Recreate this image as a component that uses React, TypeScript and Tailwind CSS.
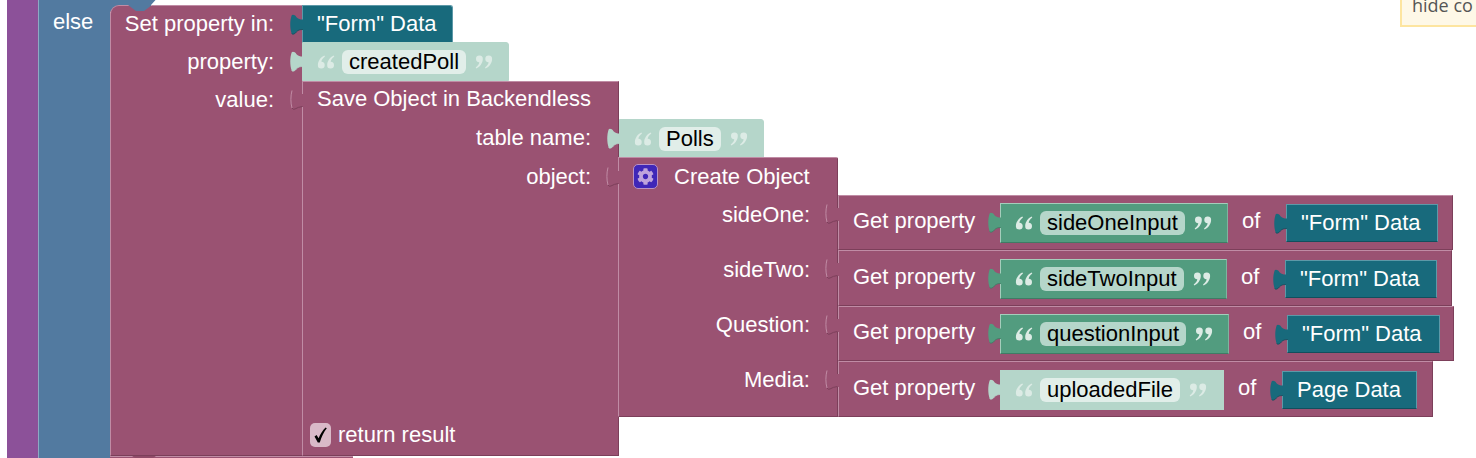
import React from "react";
import { FaCog } from "react-icons/fa";

const Tab = ({ className, fill, stroke }: { className: string; fill: string; stroke: string }) => (
  <svg className={`absolute w-[13px] h-[21px] ${className}`} viewBox="0 0 13 21">
    <path d="M13 5.5C10 5.5 8 5 6.5 3.2C5 0.8 2.5 0.2 1.6 1.5C-0.2 7 -0.2 14 1.6 19.5C2.5 20.8 5 20.2 6.5 17.8C8 16 10 15.5 13 15.5Z" fill={fill} />
    <path d="M1.6 19.5C2.5 20.8 5 20.2 6.5 17.8C8 16 10 15.5 13 15.5" fill="none" stroke={stroke} strokeWidth="0.8" />
  </svg>
);

const Socket = ({ className }: { className: string }) => (
  <svg className={`absolute w-[15px] h-[21px] ${className}`} viewBox="0 0 15 21">
    <rect x="10" y="4" width="5" height="13" fill="#9a5272" />
    <path d="M2 0.5C0.5 6 0.5 13 2 18" fill="none" stroke="#c08ca5" strokeWidth="1" />
    <path d="M2 18Q3 20 5 19Q8 17 12.5 16.5" fill="none" stroke="#7c3f5a" strokeWidth="1" />
  </svg>
);

const Quote = ({ close }: { close?: boolean }) => (
  <svg className={`w-[18px] h-[14px] shrink-0 ${close ? "ml-[2px]" : "rotate-180"}`} viewBox="0 0 18 14">
    <path d="M4.5 0.5a3.3 3.3 0 0 1 3.3 3.5c0 4-3 8-6.5 9.5l-.6-1c2-1.4 3.4-3.4 3.6-5.2a3.3 3.3 0 0 1 .2-6.8Z" fill="#dcebe5" />
    <path d="M13.8 0.5a3.3 3.3 0 0 1 3.3 3.5c0 4-3 8-6.5 9.5l-.6-1c2-1.4 3.4-3.4 3.6-5.2a3.3 3.3 0 0 1 .2-6.8Z" fill="#dcebe5" />
  </svg>
);

const Str = ({ text, light, className }: { text: string; light?: boolean; className: string }) => (
  <div
    className={`relative shrink-0 flex items-center box-border pl-[14px] gap-[7px] border ${
      light
        ? "bg-[#b5d6ca] border-[#b5d6ca]"
        : "bg-[#529c7f] border-t-[#a5cdbb] border-l-[#a5cdbb] border-b-[#3f7c65] border-r-[#7fb49f]"
    } ${className}`}
  >
    <Tab className="-left-[13px] top-[8px]" fill={light ? "#b5d6ca" : "#529c7f"} stroke={light ? "#b5d6ca" : "#3f7c65"} />
    <Quote />
    <span
      className={`h-[24px] leading-[24px] rounded-[6px] px-[7px] text-black text-[22px] whitespace-nowrap ${
        light ? "bg-[#e1eee9]" : "bg-[#b5d6ca]"
      }`}
    >
      {text}
    </span>
    <Quote close />
  </div>
);

const Teal = ({ text, className }: { text: string; className: string }) => (
  <div
    className={`relative shrink-0 box-border border border-t-[#5d99a8] border-l-[#5d99a8] border-r-[#5d99a8] border-b-[#114f5d] bg-[#186a7c] text-white text-[22px] flex items-center pl-[14px] whitespace-nowrap ${className}`}
  >
    <Tab className="-left-[13px] top-[8px]" fill="#186a7c" stroke="#114f5d" />
    {text}
  </div>
);

const Row = ({
  className,
  string,
  stringW,
  teal,
  tealW,
  light,
}: {
  className: string;
  string: string;
  stringW: string;
  teal: string;
  tealW: string;
  light?: boolean;
}) => (
  <div
    className={`relative box-border flex items-start border border-t-[#c08ca5] border-l-[#c08ca5] border-b-[#7c3f5a] border-r-[#7c3f5a] bg-[#9a5272] text-white text-[22px] leading-[24px] ${className}`}
  >
    <Socket className="-left-[14px] top-[8px]" />
    <span className="w-[161px] shrink-0 pl-[14px] pt-[6px]">Get property</span>
    <Str text={string} light={light} className={`h-[40px] ${stringW}`} />
    <span className="w-[58px] shrink-0 pl-[14px] pt-[6px]">of</span>
    <Teal text={teal} className={`h-[38px] mt-[1px] ${tealW}`} />
  </div>
);

export default function App() {
  return (
    <div className="relative flex w-[1476px] h-[458px] overflow-hidden bg-white pl-[7px] font-['Liberation_Sans',Arial,sans-serif]">
      <div className="w-[31px] shrink-0 bg-[#8c5199]" />
      <div className="w-[72px] shrink-0 box-border bg-[#527aa0] border-l border-l-[#8da9c3] text-white text-[22px] leading-[24px] pl-[14px] pt-[10px]">
        else
      </div>

      <div className="relative flex flex-col pt-[5px]">
        <svg className="absolute -left-[2px] top-0 w-[48px] h-[14px]" viewBox="0 0 48 14">
          <path d="M0 0H47.5L43 5V12H0Z" fill="#527aa0" />
        </svg>

        <div className="flex h-[451px] shrink-0 items-start">
          {/* Set property */}
          <div className="relative z-10 w-[193px] h-[451px] shrink-0 box-border rounded-tl-[9px] bg-[#9a5272] border border-t-[#c08ca5] border-l-[#c08ca5] border-b-[#7c3f5a] border-r-[#c08ca5] text-white text-[22px] leading-[20px] flex flex-col items-end pr-[28px] [clip-path:polygon(0_0,18px_0,26px_6px,34px_6px,42px_0,100%_0,100%_100%,0_100%)]">
            <span className="mt-[8px]">Set property in:</span>
            <span className="mt-[18px]">property:</span>
            <span className="mt-[18px]">value:</span>
          </div>

          <div className="relative z-20 flex flex-col -ml-[1px]">
            <Teal text={'"Form" Data'} className="w-[151px] h-[38px] pb-[2px] rounded-tr-[3px]" />
            <Str text="createdPoll" light className="w-[207px] h-[39px] -mt-[1px] rounded-tr-[3px]" />

            {/* Save Object */}
            <div className="relative flex items-start">
              <div className="w-[317px] h-[375px] shrink-0 box-border bg-[#9a5272] border border-t-[#c08ca5] border-l-[#c08ca5] border-b-[#7c3f5a] border-r-[#7c3f5a] text-white text-[22px] leading-[20px] flex flex-col">
                <span className="ml-[14px] mt-[7px]">Save Object in Backendless</span>
                <span className="self-end mr-[27px] mt-[19px]">table name:</span>
                <span className="self-end mr-[27px] mt-[19px]">object:</span>
                <div className="mt-auto mb-[8px] ml-[7px] flex items-center gap-[7px]">
                  <span className="flex items-center justify-center w-[21px] h-[24px] rounded-[5px] bg-[#d9b9c8]">
                    <svg className="w-[13px] h-[16px]" viewBox="0 0 13 16">
                      <path d="M0.5 9.5 2.6 8 4.6 11.2C6.2 7 8.6 3.2 11.6 0.4L12.8 1.2C9.8 5 7.4 10 5.8 15.6H3.8Z" fill="#000" />
                    </svg>
                  </span>
                  <span>return result</span>
                </div>
              </div>
              <Socket className="-left-[12px] top-[9px]" />

              <div className="flex flex-col -ml-[1px] pt-[38px]">
                <Str text="Polls" light className="w-[145px] h-[39px] ml-[1px] rounded-tr-[3px]" />

                {/* Create Object */}
                <div className="relative flex items-start -mt-[1px]">
                  <div className="w-[220px] h-[260px] shrink-0 box-border bg-[#9a5272] border border-t-[#c08ca5] border-l-[#c08ca5] border-b-[#7c3f5a] border-r-[#7c3f5a] rounded-tr-[2px] text-white text-[22px] leading-[20px] flex flex-col">
                    <div className="flex items-center mt-[6px] ml-[14px] gap-[16px]">
                      <span className="flex items-center justify-center w-[25px] h-[25px] rounded-[5px] bg-[#3f27b8] border border-[#b992c4]">
                        <FaCog className="w-[17px] h-[17px] text-[#bfa4dc]" />
                      </span>
                      <span>Create Object</span>
                    </div>
                    <span className="self-end mr-[27px] mt-[16px]">sideOne:</span>
                    <span className="self-end mr-[27px] mt-[35px]">sideTwo:</span>
                    <span className="self-end mr-[27px] mt-[35px]">Question:</span>
                    <span className="self-end mr-[27px] mt-[35px]">Media:</span>
                  </div>
                  <Socket className="-left-[12px] top-[10px]" />

                  <div className="flex flex-col pt-[38px]">
                    <Row className="w-[615px] h-[55px] pt-[7px]" string="sideOneInput" stringW="w-[228px]" teal={'"Form" Data'} tealW="w-[152px]" />
                    <Row className="w-[614px] h-[56px] pt-[8px]" string="sideTwoInput" stringW="w-[227px]" teal={'"Form" Data'} tealW="w-[152px]" />
                    <Row className="w-[616px] h-[55px] pt-[7px]" string="questionInput" stringW="w-[229px]" teal={'"Form" Data'} tealW="w-[153px]" />
                    <Row className="w-[595px] h-[56px] pt-[8px]" light string="uploadedFile" stringW="w-[224px]" teal="Page Data" tealW="w-[135px]" />
                  </div>
                </div>
              </div>
            </div>
          </div>
        </div>

        {/* Next block's top edge */}
        <div className="relative w-[243px] h-[4px] shrink-0 bg-[#9a5272] border-t border-t-[#c08ca5]">
          <svg className="absolute left-[22px] -top-[1px] w-[24px] h-[4px]" viewBox="0 0 24 4">
            <path d="M0 0H24L18 4H6Z" fill="#8f4b68" />
          </svg>
        </div>
      </div>

      {/* Tooltip */}
      <div className="absolute right-0 -top-[12px] w-[76px] h-[39px] box-border border-2 border-r-0 border-[#fde5a0] bg-[#fef8e7] pl-[10px] pt-[3px] text-[18px] leading-[24px] text-[#555555] font-['Open_Sans',sans-serif] whitespace-nowrap overflow-hidden">
        hide co
      </div>
    </div>
  );
}
